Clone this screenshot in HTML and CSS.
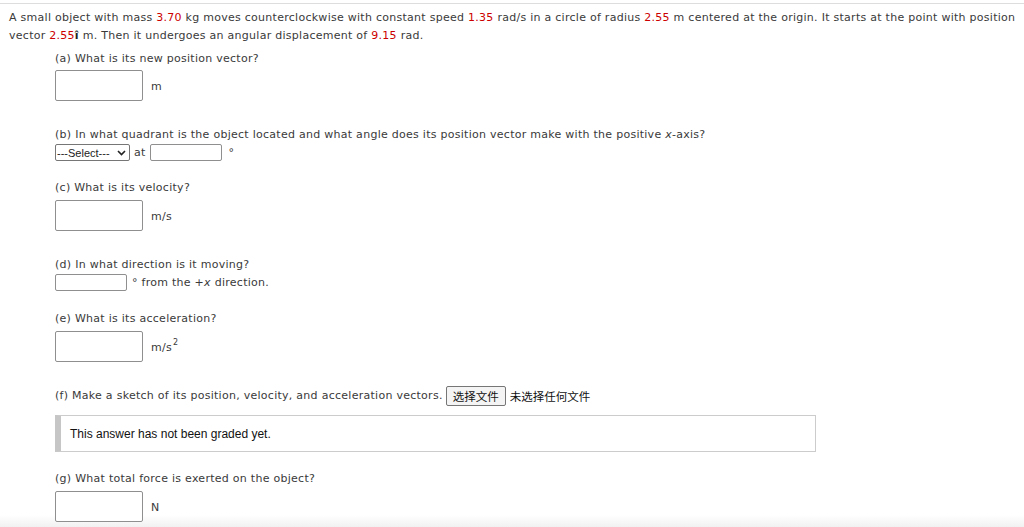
FILE: index.html
```html
<!DOCTYPE html>
<html lang="en">
<head>
<meta charset="utf-8">
<title>Question</title>
<link rel="stylesheet" href="styles.css">
</head>
<body>
<div class="question">
  <p class="stem">A small object with mass <span class="red">3.70</span> kg moves counterclockwise with constant speed <span class="red">1.35</span> rad/s in a circle of radius <span class="red">2.55</span> m centered at the origin. It starts at the point with position vector <span class="red">2.55</span><b>î</b> m. Then it undergoes an angular displacement of <span class="red">9.15</span> rad.</p>
  <div class="parts">
    <div class="part part-a">
      <div class="label">(a) What is its new position vector?</div>
      <div class="answer answer-a"><input class="box" type="text"><span class="unit">m</span></div>
    </div>
    <div class="part part-b">
      <div class="label">(b) In what quadrant is the object located and what angle does its position vector make with the positive <i>x</i>-axis?</div>
      <div class="inline-row">
        <div class="select"><span>---Select---</span><svg width="9" height="6" viewBox="0 0 9 6"><path d="M1 1l3.5 3.5L8 1" fill="none" stroke="#222" stroke-width="1.6"/></svg></div>
        <span class="at">at</span>
        <input class="small-box" type="text">
        <span class="deg">°</span>
      </div>
    </div>
    <div class="part part-c">
      <div class="label">(c) What is its velocity?</div>
      <div class="answer"><input class="box" type="text"><span class="unit">m/s</span></div>
    </div>
    <div class="part part-d">
      <div class="label">(d) In what direction is it moving?</div>
      <div class="inline-row">
        <input class="small-box" type="text">
        <span class="after">° from the +<i>x</i> direction.</span>
      </div>
    </div>
    <div class="part part-e">
      <div class="label">(e) What is its acceleration?</div>
      <div class="answer"><input class="box" type="text"><span class="unit">m/s<sup>2</sup></span></div>
    </div>
    <div class="part part-f">
      <div class="file-row">
        <span class="label">(f) Make a sketch of its position, velocity, and acceleration vectors.</span>
        <span class="file-btn">选择文件</span>
        <span class="file-none">未选择任何文件</span>
      </div>
      <div class="graded">This answer has not been graded yet.</div>
    </div>
    <div class="part part-g">
      <div class="label">(g) What total force is exerted on the object?</div>
      <div class="answer"><input class="box" type="text"><span class="unit">N</span></div>
    </div>
  </div>
</div>
</body>
</html>
```
FILE: styles.css
```css
html {
  height: 100%;
  background: linear-gradient(to bottom, #ffffff calc(100% - 12px), #f1f1f1 100%);
}
body {
  margin: 0;
  font-family: "DejaVu Sans", Verdana, sans-serif;
  font-size: 11px;
  line-height: 18px;
  letter-spacing: 0.27px;
  color: #3a3a3a;
}
.question {
  margin-top: 3px;
  border-top: 1px solid #dddddd;
  padding: 5px 2px 0 9px;
}
.stem {
  margin: 0;
}
.red {
  color: #cc0000;
}
.stem b {
  color: #222;
}
.parts {
  padding-left: 46px;
  margin-top: 5px;
}
.label {
  display: block;
}
.answer {
  display: flex;
  align-items: center;
  margin-top: 3px;
}
.answer-a {
  margin-top: 2px;
}
.box {
  box-sizing: border-box;
  width: 88px;
  height: 31px;
  margin: 0;
  border: 1px solid #8f8f8f;
  border-radius: 2px;
  background: #fff;
  padding: 0;
}
.unit {
  margin-left: 8px;
  padding-top: 3px;
}
.unit sup {
  font-size: 8px;
  line-height: 0;
  vertical-align: 6px;
  margin-left: 1px;
}
.part-b { margin-top: 25px; }
.part-c { margin-top: 18px; }
.part-d { margin-top: 25px; }
.part-e { margin-top: 19px; }
.part-f { margin-top: 24px; }
.part-g { margin-top: 18px; }
.inline-row {
  display: flex;
  align-items: center;
  height: 17px;
}
.select {
  box-sizing: border-box;
  width: 75px;
  height: 17px;
  border: 1px solid #767676;
  border-radius: 2px;
  display: flex;
  align-items: center;
  justify-content: space-between;
  padding: 0 3px 0 1px;
  font-family: "Liberation Sans", Arial, sans-serif;
  font-size: 11px;
  letter-spacing: 0;
  color: #222;
}
.at {
  margin-left: 4px;
  margin-right: 4px;
}
.small-box {
  box-sizing: border-box;
  width: 72px;
  height: 17px;
  margin: 0;
  border: 1px solid #8f8f8f;
  border-radius: 2px;
  padding: 0;
  background: #fff;
}
.deg {
  margin-left: 7px;
}
.after {
  margin-left: 5px;
}
.file-row {
  display: flex;
  align-items: center;
  height: 19px;
}
.file-btn {
  box-sizing: border-box;
  height: 20px;
  margin-left: 3px;
  padding: 0 6px;
  border: 1px solid #767676;
  border-radius: 2px;
  background: #f4f4f4;
  font-family: "Noto Sans CJK SC", sans-serif;
  font-size: 11.5px;
  line-height: 18px;
  letter-spacing: 0;
  color: #111;
}
.file-none {
  margin-left: 4px;
  font-family: "Noto Sans CJK SC", sans-serif;
  font-size: 11.5px;
  letter-spacing: 0;
  color: #111;
}
.graded {
  box-sizing: border-box;
  width: 761px;
  height: 37px;
  margin-top: 10px;
  border: 1px solid #cccccc;
  border-left: 6px solid #c6c6c6;
  padding-left: 9px;
  display: flex;
  align-items: center;
  font-family: "Liberation Sans", Arial, sans-serif;
  font-size: 12px;
  letter-spacing: 0;
  color: #111;
}
```
